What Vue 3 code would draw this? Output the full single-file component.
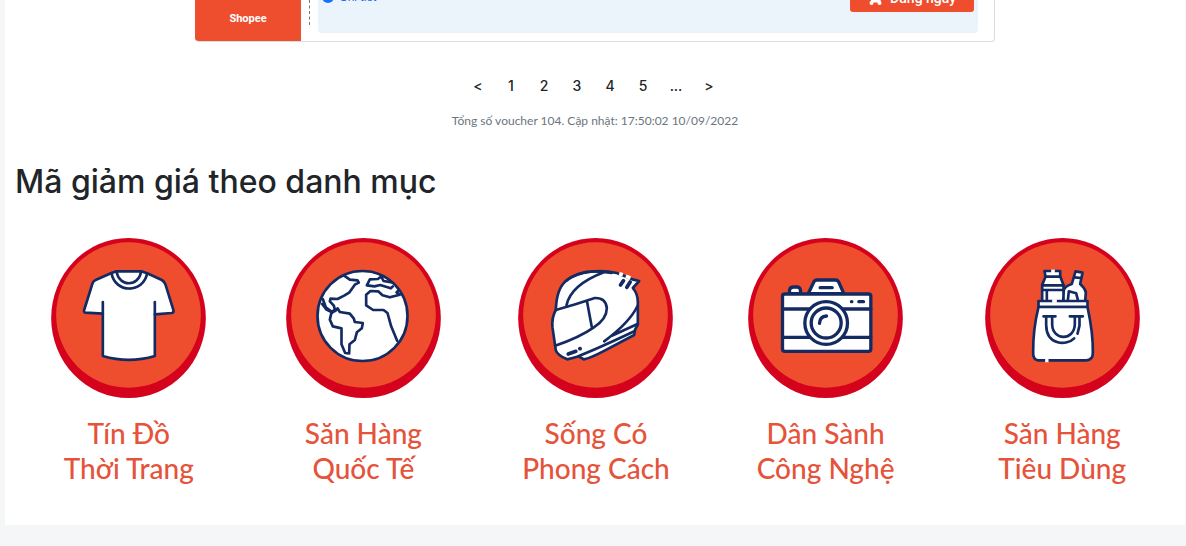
<script setup>
const pages = ['<', '1', '2', '3', '4', '5', '...', '>']
const categories = [
  { icon: 'shirt', lines: ['Tín Đồ', 'Thời Trang'] },
  { icon: 'globe', lines: ['Săn Hàng', 'Quốc Tế'] },
  { icon: 'helmet', lines: ['Sống Có', 'Phong Cách'] },
  { icon: 'camera', lines: ['Dân Sành', 'Công Nghệ'] },
  { icon: 'bag', lines: ['Săn Hàng', 'Tiêu Dùng'] },
]
</script>

<template>
  <main class="panel">
    <article class="voucher">
      <div class="brand">Shopee</div>
      <div class="divider"></div>
      <div class="detail">
        <a class="more" href="#">
          <svg class="dot" viewBox="0 0 12 12" aria-hidden="true">
            <circle cx="6" cy="6" r="6" fill="#1572ff" />
            <path d="M6 5.2v3.6M6 2.8v1.2" stroke="#fff" stroke-width="1.4" />
          </svg>
          Chi tiết
        </a>
        <button class="use" type="button">
          <svg class="cart" viewBox="0 0 14 14" aria-hidden="true">
            <path d="M0 1h2.400l.5 2H14l-1.500 6L13 11.500H2.500L3 9L1.600 2.200H0z" fill="#fff" />
            <circle cx="3.500" cy="12" r="2" fill="#fff" />
            <circle cx="11.500" cy="12" r="2" fill="#fff" />
          </svg>
          Dùng ngay
        </button>
      </div>
    </article>

    <nav class="pages" aria-label="Phân trang">
      <a v-for="p in pages" :key="p" href="#">{{ p }}</a>
    </nav>
    <p class="total">Tổng số voucher 104. Cập nhật: 17:50:02 10/09/2022</p>

    <h2>Mã giảm giá theo danh mục</h2>

    <section class="categories">
      <a v-for="c in categories" :key="c.lines.join(' ')" class="category" href="#">
        <svg class="badge" viewBox="33 24 464 480" aria-hidden="true">
          <ellipse cx="265" cy="264" rx="232" ry="240" fill="#d4021d" />
          <ellipse cx="265" cy="255" rx="217" ry="218" fill="#ef4e2e" />

          <g v-if="c.icon === 'shirt'" class="ink">
            <path class="fill" d="M229 124H303L321 130L365 150Q373 155 376 164L400 241Q401 248 394 249L344 253V378Q266 401 188 378V251L136 248Q130 247 132 240L157 160Q160 152 168 149L214 129Z" />
            <path d="M214 129C224 191 310 191 321 130M229 124C236 171 296 172 303 124M188 216V253M344 216V253" />
          </g>

          <g v-else-if="c.icon === 'globe'" class="ink">
            <circle class="fill" cx="262" cy="258" r="135" />
            <path d="M207 137L224 149L247 151L251 158L239 164L223 187L207 197L187 207L166 206L164 214L176 227L179 238L171 246L152 232L143 207M141 222L154 239L172 248" />
            <path d="M169 247L180 243L187 235L194 246L224 251L236 266L239 276L263 279L260 295L245 307L239 330L223 343L222 370L210 369L199 343V295L173 289L164 269Z" />
            <path d="M318 140L308 147L284 148L275 166L298 169L315 165L347 175L353 169M319 141L325 153L351 157" />
            <path d="M371 180L364 187L374 194L344 202L322 196L309 184L286 183L273 194V226L294 240L325 240L337 249L348 289L366 332" />
          </g>

          <g v-else-if="c.icon === 'helmet'" class="ink">
            <path class="fill" d="M329 129C284 119 215 121 176 153Q148 177 146 240Q133 262 136 293L146 361Q151 376 180 388Q201 384 215 379L230 388Q250 384 288 364L381 315L384 298L392 284V216Q392 192 377 174L396 153L379 149Z" />
            <path d="M146 240Q207 223 263 204Q296 203 299 234Q299 267 260 292Q218 322 144 347M240 217L254 292" />
            <path d="M178 226Q191 165 290 127M313 129Q224 112 176 153M391 228Q367 278 291 334M314 317L391 282M215 378Q280 352 383 303" />
            <path class="thick" d="M340 165L349 152M359 172L369 156M183 372L206 364M218 356h1" />
            <path class="patch" d="M336 131L347 134M356 139L370 144" />
          </g>

          <g v-else-if="c.icon === 'camera'" class="ink thick-lines">
            <path class="fill" d="M157 191V180Q159 171 169 171H181Q189 172 190 181V191ZM213 191L231 154Q234 150 239 150H295Q301 150 304 155L320 191Z" />
            <rect class="fill" x="136" y="192" width="265" height="172" rx="7" />
            <path d="M136 237H401M136 322H401M249 173H285M343 215h1M365 215H379" />
            <circle class="fill" cx="267" cy="279" r="64" />
            <circle cx="267" cy="279" r="45" />
            <path d="M247 280Q248 259 268 258" />
          </g>

          <g v-else class="ink">
            <path class="fill" d="M211 123H258V139L268 165V215H204V165L214 140ZM267 214L269 180Q272 169 293 162L304 124L325 128L318 162Q332 174 335 187L333 214Z" />
            <path class="fill" d="M193 213H340V231H193Z" />
            <path class="fill" d="M193 231H340C348 268 357 325 356 369Q356 390 336 391H192Q176 389 177 368Q176 300 193 231Z" />
            <path d="M213 140H258M206 166H268M206 180H268M218 181V211M302 142L320 144M281 211L284 184L306 190L311 209M208 259H244M287 259H326M216 260V285C217 348 279 347 300 325M234 260V282C234 333 301 334 302 282V260M316 260V287L310 311" />
            <path class="patch" d="M231 124H242M234 213H248M213 391H223" />
          </g>
        </svg>
        <span class="label">
          <span v-for="line in c.lines" :key="line">{{ line }}</span>
        </span>
      </a>
    </section>
  </main>
</template>

<style>
body {
  margin: 0;
  background: #f5f6f8;
}
</style>

<style scoped>
.panel {
  margin: 0 1px 20px 5px;
  padding-bottom: 39px;
  background: #fff;
  font-family: Inter, "Noto Sans", sans-serif;
  color: #212529;
}
a {
  color: inherit;
  text-decoration: none;
}
.voucher {
  box-sizing: border-box;
  display: flex;
  width: 68%;
  max-width: 800px;
  height: 42px;
  margin: 0 auto;
  border: 1px solid #dcdcdc;
  border-width: 0 1px 1px 0;
  border-radius: 0 0 4px 4px;
  overflow: hidden;
  font-family: "Liberation Sans", sans-serif;
}
.brand {
  width: 106px;
  flex: none;
  padding-top: 12px;
  background: #ef4e2e;
  color: #fff;
  font-family: Roboto, sans-serif;
  font-size: 11px;
  font-weight: 700;
  line-height: 14px;
  text-align: center;
}
.divider {
  height: 25px;
  margin: 0 8px;
  border-left: 1px dashed #777;
}
.detail {
  display: flex;
  flex: 1;
  align-items: flex-end;
  justify-content: space-between;
  height: 12px;
  margin-right: 16px;
  padding: 0 4px 21px;
  border-radius: 0 0 4px 4px;
  background: #ebf4fa;
}
.more {
  display: flex;
  align-items: center;
  gap: 5px;
  margin-bottom: 8px;
  color: #1572ff;
  font-size: 12px;
  line-height: 14px;
}
.dot {
  width: 12px;
  height: 12px;
}
.use {
  display: flex;
  align-items: center;
  justify-content: center;
  gap: 8px;
  width: 124px;
  height: 28px;
  padding: 0;
  border: 0;
  border-radius: 3px;
  background: #ef4e2e;
  color: #fff;
  font: 500 14px Roboto, sans-serif;
}
.cart {
  width: 14px;
  height: 14px;
}
.pages {
  display: flex;
  justify-content: center;
  margin-top: 32px;
  padding-right: 3px;
  font-size: 14px;
  font-weight: 500;
  line-height: 24px;
}
.pages a {
  width: 33px;
  text-align: center;
}
.total {
  margin: 13px 0 0;
  color: #6c757d;
  font-family: Lato, sans-serif;
  font-size: 12px;
  line-height: 20px;
  text-align: center;
}
h2 {
  margin: 31px 10px 0;
  font-size: 32px;
  font-weight: 500;
  line-height: 40px;
}
.categories {
  display: grid;
  grid-template-columns: 236fr 234fr 232fr 228fr 246fr;
  margin-top: 36px;
  padding-left: 6px;
}
.category {
  display: flex;
  flex-direction: column;
  align-items: center;
}
.badge {
  width: 155px;
  height: 160px;
}
.ink {
  fill: none;
  stroke: #132b62;
  stroke-width: 8;
  stroke-linecap: round;
  stroke-linejoin: round;
}
.thick-lines {
  stroke-width: 10;
}
.fill {
  fill: #fff;
}
.thick {
  stroke-width: 11;
}
.patch {
  stroke: #fff;
  stroke-width: 11;
  stroke-linecap: butt;
}
.label {
  display: flex;
  flex-direction: column;
  align-items: center;
  margin-top: 18px;
  color: #e5533a;
  font-family: Lato, sans-serif;
  font-size: 28px;
  font-weight: 500;
  line-height: 35px;
  white-space: nowrap;
}
</style>
